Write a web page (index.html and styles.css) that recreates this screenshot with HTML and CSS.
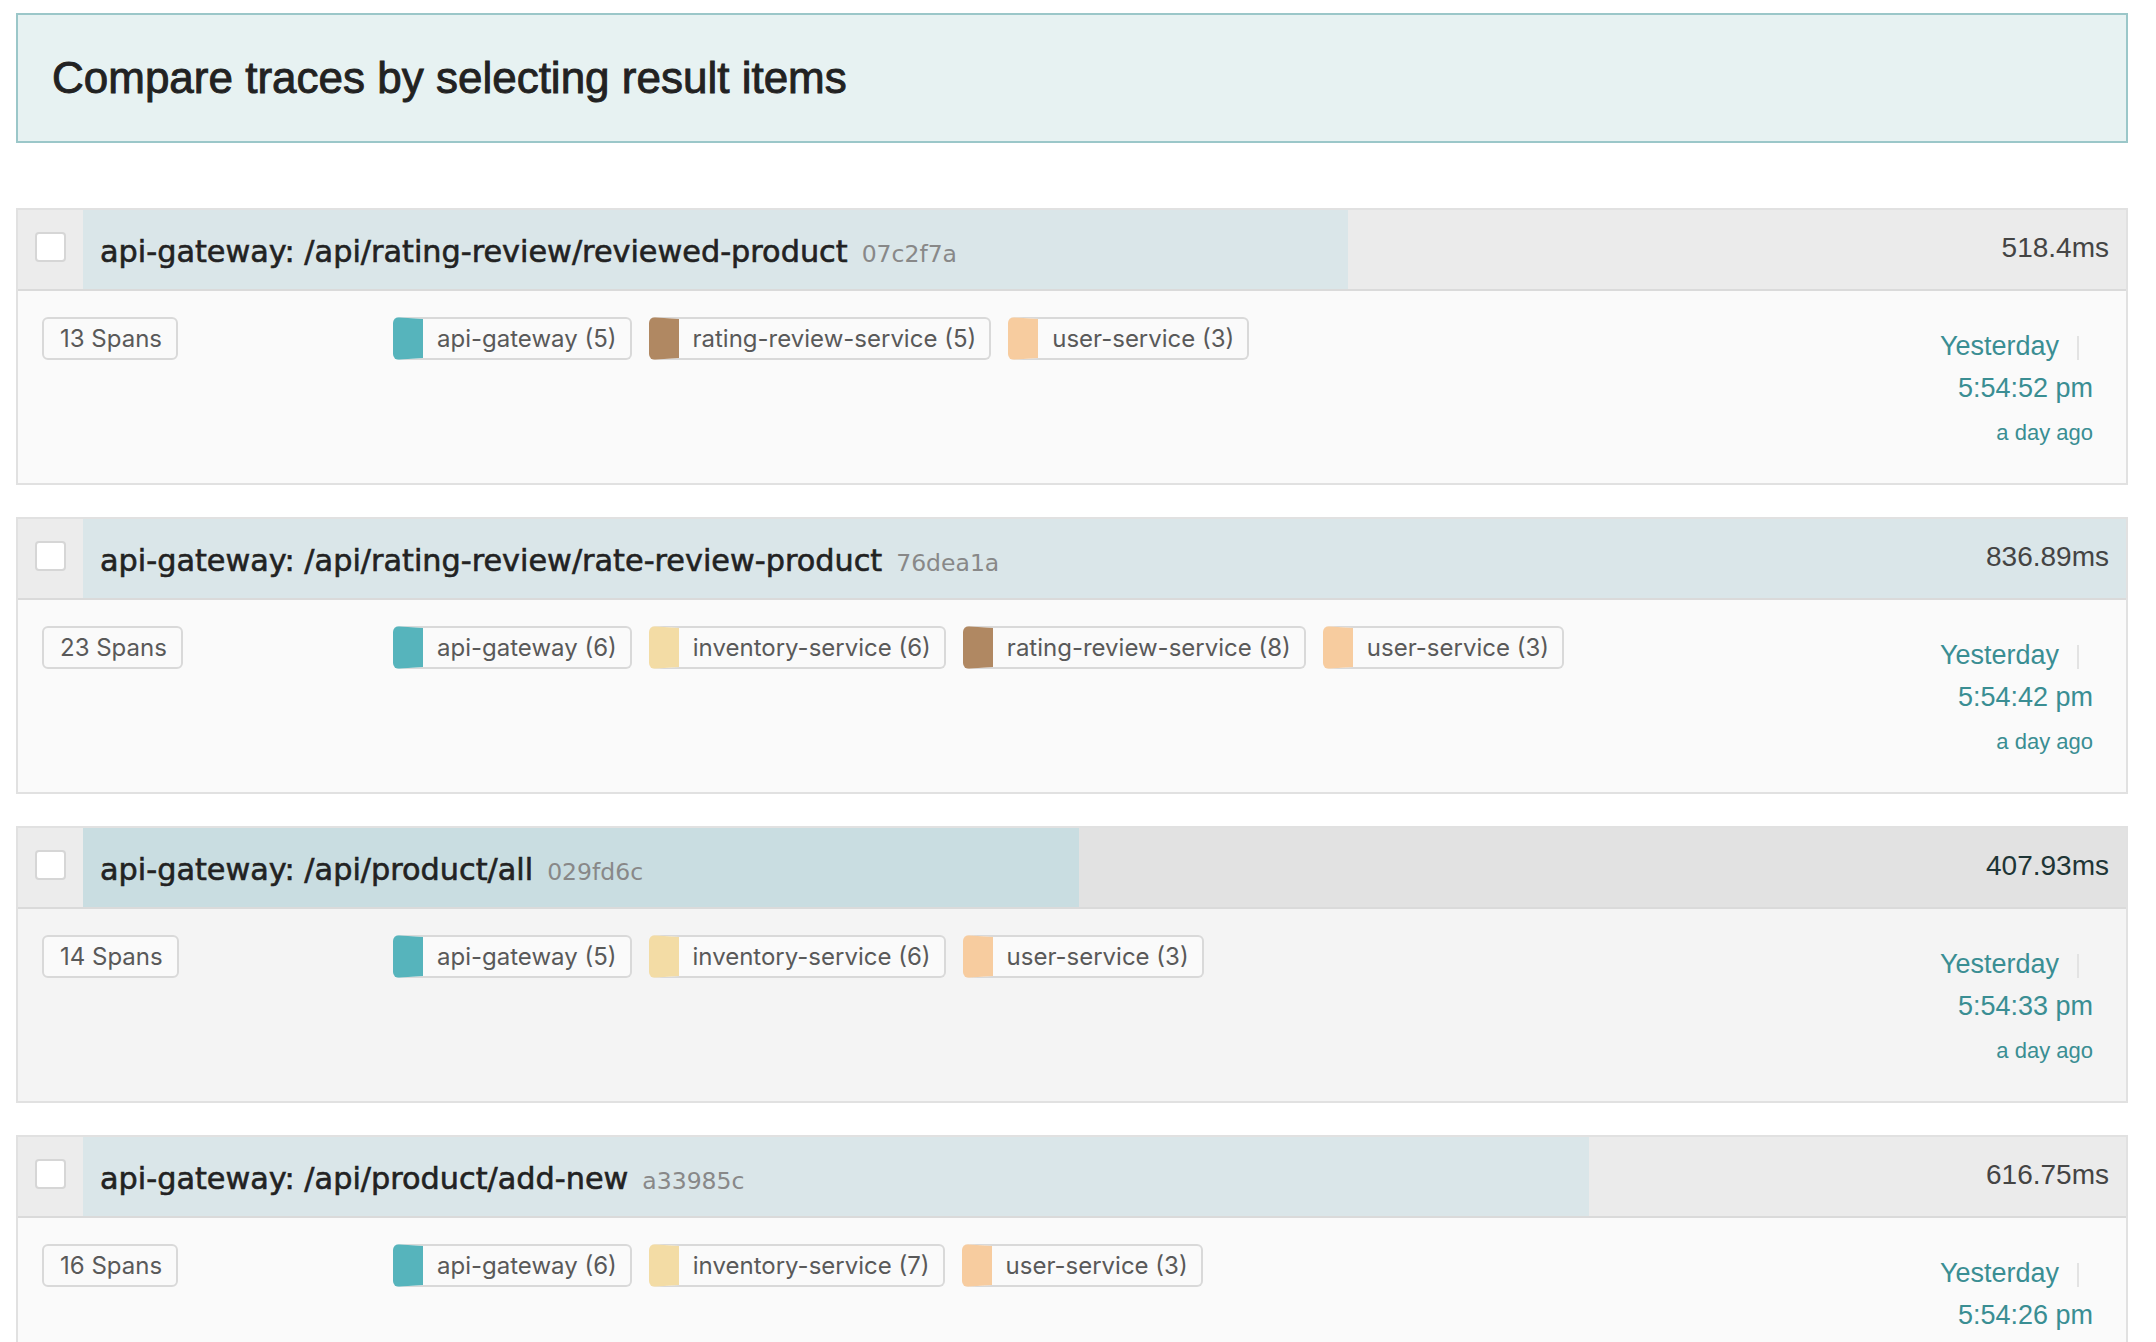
FILE: index.html
```html
<!DOCTYPE html>
<html lang="en">
<head>
<meta charset="utf-8">
<title>Search results</title>
<link rel="stylesheet" href="styles.css">
</head>
<body>
<div class="page">
  <div class="banner">
    <h1>Compare traces by selecting result items</h1>
  </div>

  <div class="results">
    <div class="trace">
      <div class="trace-head">
        <div class="select-cell"><span class="checkbox"></span></div>
        <div class="title-area">
          <span class="duration-bar" style="width:61.94%"></span>
          <h3 class="trace-name">api-gateway: /api/rating-review/reviewed-product<span class="trace-id">07c2f7a</span></h3>
          <span class="duration">518.4ms</span>
        </div>
      </div>
      <div class="trace-body">
        <div class="spans-col"><span class="tag">13 Spans</span></div>
        <ul class="services">
          <li class="tag svc svc-api">api-gateway (5)</li>
          <li class="tag svc svc-rating">rating-review-service (5)</li>
          <li class="tag svc svc-user">user-service (3)</li>
        </ul>
        <div class="timestamp">
          <div class="ts-day">Yesterday<span class="ts-divider"></span></div>
          <div class="ts-time">5:54:52 pm</div>
          <div class="ts-ago">a day ago</div>
        </div>
      </div>
    </div>

    <div class="trace">
      <div class="trace-head">
        <div class="select-cell"><span class="checkbox"></span></div>
        <div class="title-area">
          <span class="duration-bar" style="width:100%"></span>
          <h3 class="trace-name">api-gateway: /api/rating-review/rate-review-product<span class="trace-id">76dea1a</span></h3>
          <span class="duration">836.89ms</span>
        </div>
      </div>
      <div class="trace-body">
        <div class="spans-col"><span class="tag">23 Spans</span></div>
        <ul class="services">
          <li class="tag svc svc-api">api-gateway (6)</li>
          <li class="tag svc svc-inventory">inventory-service (6)</li>
          <li class="tag svc svc-rating">rating-review-service (8)</li>
          <li class="tag svc svc-user">user-service (3)</li>
        </ul>
        <div class="timestamp">
          <div class="ts-day">Yesterday<span class="ts-divider"></span></div>
          <div class="ts-time">5:54:42 pm</div>
          <div class="ts-ago">a day ago</div>
        </div>
      </div>
    </div>

    <div class="trace is-active">
      <div class="trace-head">
        <div class="select-cell"><span class="checkbox"></span></div>
        <div class="title-area">
          <span class="duration-bar" style="width:48.74%"></span>
          <h3 class="trace-name">api-gateway: /api/product/all<span class="trace-id">029fd6c</span></h3>
          <span class="duration">407.93ms</span>
        </div>
      </div>
      <div class="trace-body">
        <div class="spans-col"><span class="tag">14 Spans</span></div>
        <ul class="services">
          <li class="tag svc svc-api">api-gateway (5)</li>
          <li class="tag svc svc-inventory">inventory-service (6)</li>
          <li class="tag svc svc-user">user-service (3)</li>
        </ul>
        <div class="timestamp">
          <div class="ts-day">Yesterday<span class="ts-divider"></span></div>
          <div class="ts-time">5:54:33 pm</div>
          <div class="ts-ago">a day ago</div>
        </div>
      </div>
    </div>

    <div class="trace">
      <div class="trace-head">
        <div class="select-cell"><span class="checkbox"></span></div>
        <div class="title-area">
          <span class="duration-bar" style="width:73.70%"></span>
          <h3 class="trace-name">api-gateway: /api/product/add-new<span class="trace-id">a33985c</span></h3>
          <span class="duration">616.75ms</span>
        </div>
      </div>
      <div class="trace-body">
        <div class="spans-col"><span class="tag">16 Spans</span></div>
        <ul class="services">
          <li class="tag svc svc-api">api-gateway (6)</li>
          <li class="tag svc svc-inventory">inventory-service (7)</li>
          <li class="tag svc svc-user">user-service (3)</li>
        </ul>
        <div class="timestamp">
          <div class="ts-day">Yesterday<span class="ts-divider"></span></div>
          <div class="ts-time">5:54:26 pm</div>
          <div class="ts-ago">a day ago</div>
        </div>
      </div>
    </div>
  </div>
</div>
</body>
</html>
```

FILE: styles.css
```css
html, body {
  margin: 0;
  padding: 0;
  overflow: hidden;
  background: #ffffff;
}

body {
  font-family: "Liberation Sans", Arial, sans-serif;
  color: #222222;
}

.page {
  padding: 13px 28px 0 16px;
}

/* Banner */
.banner {
  height: 130px;
  box-sizing: border-box;
  border: 2px solid #9bc7c9;
  background: #e7f2f2;
  display: flex;
  align-items: center;
  padding-left: 34px;
}

.banner h1 {
  margin: 0;
  font-size: 44px;
  font-weight: normal;
  line-height: 1.15;
  color: #222222;
  -webkit-text-stroke: 0.9px #222222;
}

/* Results list */
.results {
  margin-top: 65px;
  display: flex;
  flex-direction: column;
  gap: 32px;
}

.trace {
  border: 2px solid #e1e1e1;
  background: #fafafa;
}

.trace-head {
  display: flex;
  height: 81px;
  box-sizing: border-box;
  border-bottom: 2px solid #dadada;
  background: #ebebeb;
}

.select-cell {
  width: 65px;
  flex: none;
  display: flex;
  justify-content: center;
  align-items: flex-start;
  padding-top: 22px;
  box-sizing: border-box;
  background: #ececec;
}

.checkbox {
  display: block;
  width: 31px;
  height: 30px;
  box-sizing: border-box;
  border: 2px solid #d6d6d6;
  border-radius: 4px;
  background: #ffffff;
}

.title-area {
  flex: 1;
  position: relative;
  display: flex;
  justify-content: space-between;
  align-items: flex-start;
  padding: 22px 17px 0 17px;
  min-width: 0;
}

.duration-bar {
  position: absolute;
  left: 0;
  top: 0;
  bottom: 0;
  background: #dae6e9;
}

.trace-name {
  position: relative;
  margin: 0;
  font-family: "DejaVu Sans", "Liberation Sans", sans-serif;
  font-size: 30.3px;
  font-weight: normal;
  line-height: 40px;
  color: #222222;
  white-space: nowrap;
  -webkit-text-stroke: 0.6px #222222;
}

.trace-id {
  margin-left: 14px;
  font-size: 23.5px;
  color: #888888;
  -webkit-text-stroke: 0;
}

.duration {
  position: relative;
  font-size: 28px;
  line-height: 32px;
  color: #444444;
}

/* Body */
.trace-body {
  display: grid;
  grid-template-columns: 351px 1fr auto;
  align-items: start;
  padding: 26px 33px 26px 24px;
}

.tag {
  display: inline-flex;
  align-items: center;
  height: 43px;
  box-sizing: border-box;
  padding: 0 14px 0 16px;
  border: 2px solid #d9d9d9;
  border-radius: 6px;
  background: #fafafa;
  font-family: Inter, "Noto Sans", sans-serif;
  font-size: 24px;
  line-height: 39px;
  color: #595959;
  white-space: nowrap;
}

.services {
  list-style: none;
  margin: 0;
  padding: 0;
  display: flex;
  flex-wrap: wrap;
  gap: 17px;
}

.svc {
  border-left-width: 30px;
  padding: 0 13px 0 14px;
}

.svc-api { border-left-color: #56b4bc; }
.svc-rating { border-left-color: #b08862; }
.svc-user { border-left-color: #f7cc9f; }
.svc-inventory { border-left-color: #f3dca5; }

.timestamp {
  margin-top: 8px;
  text-align: right;
  color: #3a8e93;
  font-size: 27px;
}

.ts-day,
.ts-time {
  line-height: 42px;
  white-space: nowrap;
}

.ts-ago {
  font-size: 22px;
  line-height: 48px;
}

.ts-divider {
  display: inline-block;
  width: 2px;
  height: 24px;
  margin: 0 14px 0 18px;
  background: #e3e3e3;
  vertical-align: middle;
}

/* Highlighted row */
.trace.is-active {
  background: #f4f4f4;
}

.trace.is-active .trace-head {
  background: #e2e2e2;
}

.trace.is-active .duration-bar {
  background: #c9dde1;
}

.trace.is-active .duration {
  color: #1e3536;
}
```
